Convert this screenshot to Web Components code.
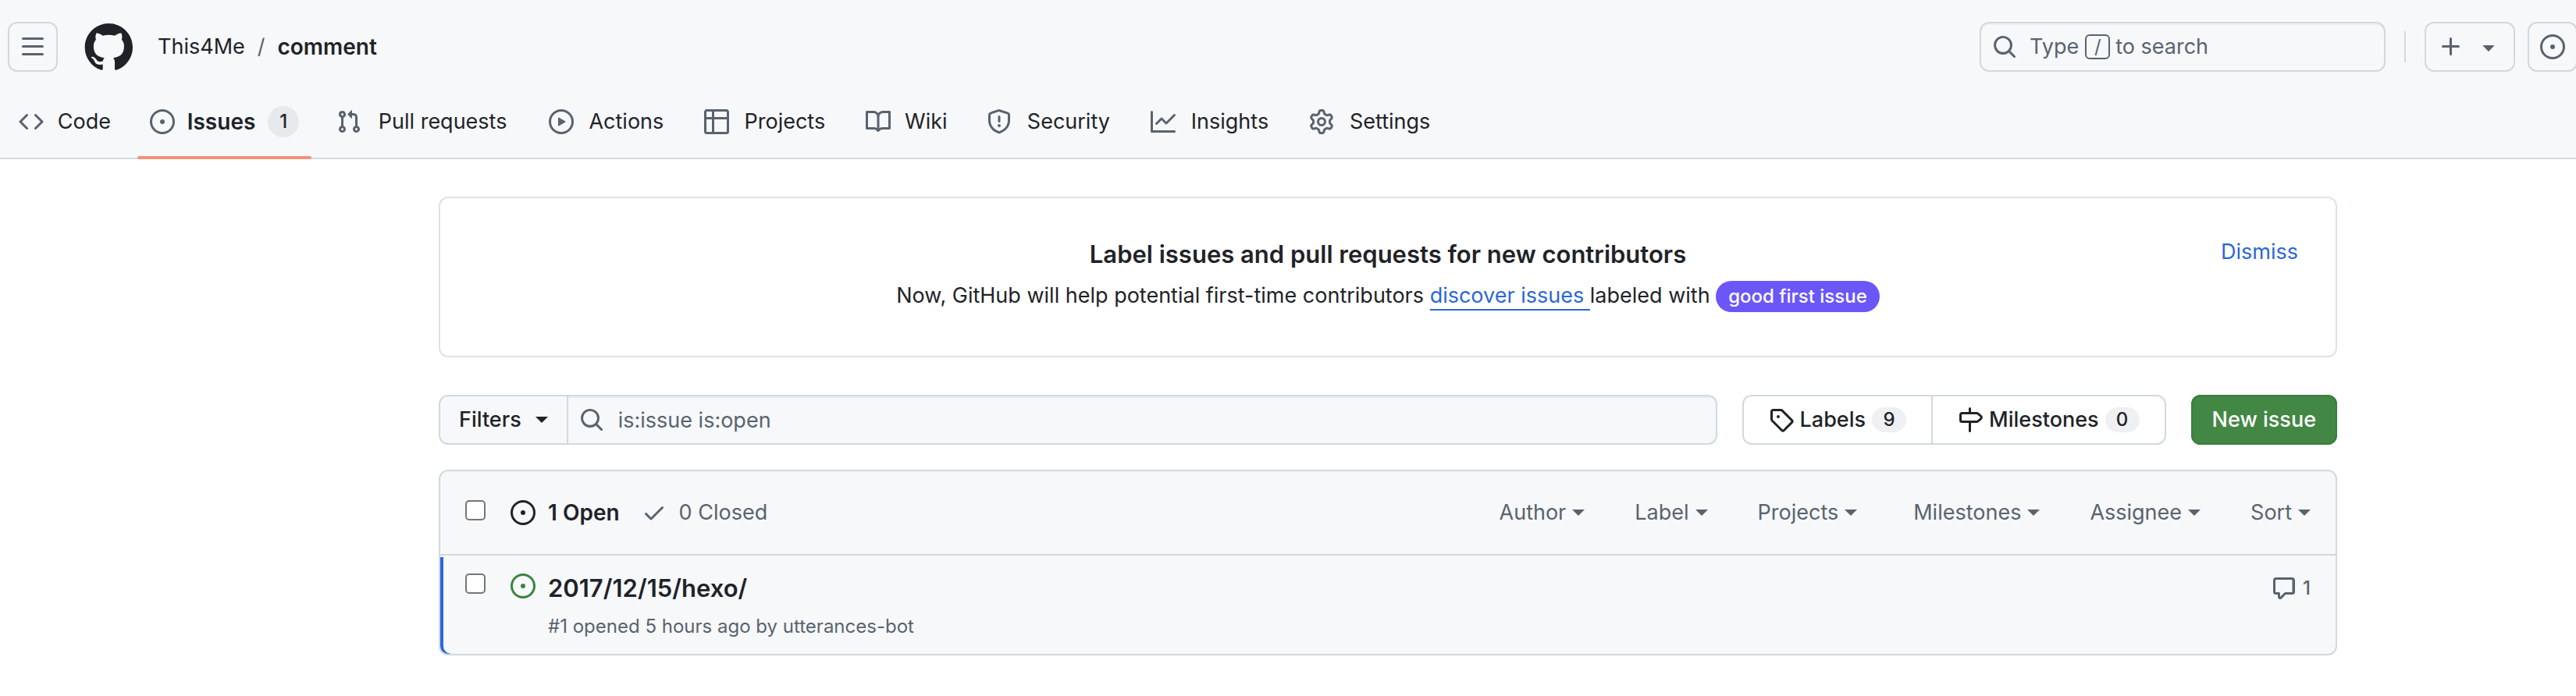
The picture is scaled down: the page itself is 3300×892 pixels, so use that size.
<!DOCTYPE html>
<html lang="en">
<head>
<meta charset="utf-8">
<meta name="viewport" content="width=device-width, initial-scale=1">
<title>Issues · This4Me/comment</title>
<style>
:root {
  --fg: #1f2328;
  --muted: #59636e;
  --border: #d1d9e0;
  --border-soft: #dee3e8;
  --subtle: #f6f8fa;
  --blue: #2c67d8;
  --green: #3b833f;
}
html, body { margin: 0; background: #fff; }
body {
  color: var(--fg);
  font-family: Inter, "Noto Sans", sans-serif;
  font-size: 27px;
  line-height: 42px;
  overflow-x: hidden;
}
main {
  display: flex;
  flex-direction: column;
  padding: 48px 306px 48px 562px;
}
gh-toolbar { margin: 48px 0 32px; }
</style>
</head>
<body>
<gh-header owner="This4Me" repo="comment"></gh-header>
<gh-nav>
  <gh-nav-item icon="code" label="Code"></gh-nav-item>
  <gh-nav-item icon="issue" label="Issues" count="1" current></gh-nav-item>
  <gh-nav-item icon="pull" label="Pull requests"></gh-nav-item>
  <gh-nav-item icon="play" label="Actions"></gh-nav-item>
  <gh-nav-item icon="table" label="Projects"></gh-nav-item>
  <gh-nav-item icon="book" label="Wiki"></gh-nav-item>
  <gh-nav-item icon="shield" label="Security"></gh-nav-item>
  <gh-nav-item icon="graph" label="Insights"></gh-nav-item>
  <gh-nav-item icon="gear" label="Settings"></gh-nav-item>
</gh-nav>
<main>
  <gh-banner>
    <span slot="title">Label issues and pull requests for new contributors</span>
  </gh-banner>
  <gh-toolbar></gh-toolbar>
  <gh-issue-list>
    <gh-menu slot="menus" label="Author"></gh-menu>
    <gh-menu slot="menus" label="Label"></gh-menu>
    <gh-menu slot="menus" label="Projects" wide></gh-menu>
    <gh-menu slot="menus" label="Milestones"></gh-menu>
    <gh-menu slot="menus" label="Assignee"></gh-menu>
    <gh-menu slot="menus" label="Sort"></gh-menu>
    <gh-issue-row comments="1">
      <span slot="title">2017/12/15/hexo/</span>
      <span slot="meta">#1 opened 5 hours ago by utterances-bot</span>
    </gh-issue-row>
  </gh-issue-list>
</main>

<script>
const ICONS = {
  bars: 'M1 2.75A.75.75 0 0 1 1.75 2h12.5a.75.75 0 0 1 0 1.5H1.75A.75.75 0 0 1 1 2.75Zm0 5A.75.75 0 0 1 1.75 7h12.5a.75.75 0 0 1 0 1.5H1.75A.75.75 0 0 1 1 7.75ZM1.75 12h12.5a.75.75 0 0 1 0 1.5H1.75a.75.75 0 0 1 0-1.5Z',
  mark: 'M12.5.75C6.146.75 1 5.896 1 12.25c0 5.089 3.292 9.387 7.863 10.91.575.101.79-.244.79-.546 0-.273-.014-1.178-.014-2.142-2.889.532-3.636-.704-3.866-1.35-.13-.331-.69-1.352-1.18-1.625-.402-.216-.977-.748-.014-.762.906-.014 1.553.834 1.769 1.179 1.035 1.74 2.688 1.25 3.349.948.1-.747.402-1.25.733-1.538-2.559-.287-5.232-1.279-5.232-5.678 0-1.25.445-2.285 1.178-3.09-.115-.288-.517-1.467.115-3.048 0 0 .963-.302 3.163 1.179.92-.259 1.897-.388 2.875-.388.977 0 1.955.13 2.875.388 2.2-1.495 3.162-1.179 3.162-1.179.633 1.581.23 2.76.115 3.048.733.805 1.179 1.825 1.179 3.09 0 4.413-2.688 5.39-5.247 5.678.417.36.776 1.05.776 2.128 0 1.538-.014 2.774-.014 3.162 0 .302.216.662.79.547C20.709 21.637 24 17.324 24 12.25 24 5.896 18.854.75 12.5.75Z',
  code: 'm11.28 3.22 4.25 4.25a.75.75 0 0 1 0 1.06l-4.25 4.25a.749.749 0 0 1-1.275-.326.749.749 0 0 1 .215-.734L13.94 8l-3.72-3.72a.749.749 0 0 1 .326-1.275.749.749 0 0 1 .734.215Zm-6.56 0a.751.751 0 0 1 1.042.018.751.751 0 0 1 .018 1.042L2.06 8l3.72 3.72a.749.749 0 0 1-.326 1.275.749.749 0 0 1-.734-.215L.47 8.53a.75.75 0 0 1 0-1.06Z',
  issue: 'M8 9.5a1.5 1.5 0 1 0 0-3 1.5 1.5 0 0 0 0 3ZM8 0a8 8 0 1 1 0 16A8 8 0 0 1 8 0ZM1.5 8a6.5 6.5 0 1 0 13 0 6.5 6.5 0 0 0-13 0Z',
  pull: 'M1.5 3.25a2.25 2.25 0 1 1 3 2.122v5.256a2.251 2.251 0 1 1-1.5 0V5.372A2.25 2.25 0 0 1 1.5 3.25Zm5.677-.177L9.573.677A.25.25 0 0 1 10 .854V2.5h1A2.5 2.5 0 0 1 13.5 5v5.628a2.251 2.251 0 1 1-1.5 0V5a1 1 0 0 0-1-1h-1v1.646a.25.25 0 0 1-.427.177L7.177 3.427a.25.25 0 0 1 0-.354ZM3.75 2.5a.75.75 0 1 0 0 1.5.75.75 0 0 0 0-1.5Zm0 9.5a.75.75 0 1 0 0 1.5.75.75 0 0 0 0-1.5Zm8.25.75a.75.75 0 1 0 1.5 0 .75.75 0 0 0-1.5 0Z',
  play: 'M8 0a8 8 0 1 1 0 16A8 8 0 0 1 8 0ZM1.5 8a6.5 6.5 0 1 0 13 0 6.5 6.5 0 0 0-13 0Zm4.879-2.773 4.264 2.559a.25.25 0 0 1 0 .428l-4.264 2.559A.25.25 0 0 1 6 10.559V5.442a.25.25 0 0 1 .379-.215Z',
  table: 'M0 1.75C0 .784.784 0 1.75 0h12.5C15.216 0 16 .784 16 1.75v12.5A1.75 1.75 0 0 1 14.25 16H1.75A1.75 1.75 0 0 1 0 14.25ZM6.5 6.5v8h7.75a.25.25 0 0 0 .25-.25V6.5Zm8-1.5V1.75a.25.25 0 0 0-.25-.25H6.5V5Zm-13 1.5v7.75c0 .138.112.25.25.25H5v-8ZM5 5V1.5H1.75a.25.25 0 0 0-.25.25V5Z',
  book: 'M0 1.75A.75.75 0 0 1 .75 1h4.253c1.227 0 2.317.59 3 1.501A3.743 3.743 0 0 1 11.006 1h4.245a.75.75 0 0 1 .75.75v10.5a.75.75 0 0 1-.75.75h-4.507a2.25 2.25 0 0 0-1.591.659l-.622.621a.75.75 0 0 1-1.06 0l-.622-.621A2.25 2.25 0 0 0 5.258 13H.75a.75.75 0 0 1-.75-.75Zm7.251 10.324.004-5.073-.002-2.253A2.25 2.25 0 0 0 5.003 2.5H1.5v9h3.757a3.75 3.75 0 0 1 1.994.574ZM8.755 4.75l-.004 7.322a3.752 3.752 0 0 1 1.992-.572H14.5v-9h-3.495a2.25 2.25 0 0 0-2.25 2.25Z',
  shield: 'M7.467.133a1.748 1.748 0 0 1 1.066 0l5.25 1.68A1.75 1.75 0 0 1 15 3.48V7c0 1.566-.32 3.182-1.303 4.682-.983 1.498-2.585 2.813-5.032 3.855a1.697 1.697 0 0 1-1.33 0c-2.447-1.042-4.049-2.357-5.032-3.855C1.32 10.182 1 8.566 1 7V3.48a1.75 1.75 0 0 1 1.217-1.667Zm.61 1.429a.25.25 0 0 0-.153 0l-5.25 1.68a.25.25 0 0 0-.174.238V7c0 1.358.275 2.666 1.057 3.86.784 1.194 2.121 2.34 4.366 3.297a.196.196 0 0 0 .154 0c2.245-.956 3.582-2.104 4.366-3.298C13.225 9.666 13.5 8.36 13.5 7V3.48a.251.251 0 0 0-.174-.237l-5.25-1.68ZM8.75 4.75v3a.75.75 0 0 1-1.5 0v-3a.75.75 0 0 1 1.5 0ZM9 10.5a1 1 0 1 1-2 0 1 1 0 0 1 2 0Z',
  graph: 'M1.5 1.75V13.5h13.75a.75.75 0 0 1 0 1.5H.75a.75.75 0 0 1-.75-.75V1.75a.75.75 0 0 1 1.5 0Zm14.28 2.53-5.25 5.25a.75.75 0 0 1-1.06 0L7 7.06 4.28 9.78a.751.751 0 0 1-1.042-.018.751.751 0 0 1-.018-1.042l3.25-3.25a.75.75 0 0 1 1.06 0L10 7.94l4.72-4.72a.751.751 0 0 1 1.042.018.751.751 0 0 1 .018 1.042Z',
  gear: 'M8 0a8.2 8.2 0 0 1 .701.031C9.444.095 9.99.645 10.16 1.29l.288 1.107c.018.066.079.158.212.224.231.114.454.243.668.386.123.082.233.09.299.071l1.103-.303c.644-.176 1.392.021 1.82.63.27.385.506.792.704 1.218.315.675.111 1.422-.364 1.891l-.814.806c-.049.048-.098.147-.088.294.016.257.016.515 0 .772-.01.147.038.246.088.294l.814.806c.475.469.679 1.216.364 1.891a7.977 7.977 0 0 1-.704 1.217c-.428.61-1.176.807-1.82.63l-1.102-.302c-.067-.019-.177-.011-.3.071a5.909 5.909 0 0 1-.668.386c-.133.066-.194.158-.211.224l-.29 1.106c-.168.646-.715 1.196-1.458 1.26a8.006 8.006 0 0 1-1.402 0c-.743-.064-1.289-.614-1.458-1.26l-.289-1.106c-.018-.066-.079-.158-.212-.224a5.738 5.738 0 0 1-.668-.386c-.123-.082-.233-.09-.299-.071l-1.103.303c-.644.176-1.392-.021-1.82-.63a8.12 8.12 0 0 1-.704-1.218c-.315-.675-.111-1.422.363-1.891l.815-.806c.05-.048.098-.147.088-.294a6.214 6.214 0 0 1 0-.772c.01-.147-.038-.246-.088-.294l-.815-.806C.635 6.045.431 5.298.746 4.623a7.92 7.92 0 0 1 .704-1.217c.428-.61 1.176-.807 1.82-.63l1.102.302c.067.019.177.011.3-.071.214-.143.437-.272.668-.386.133-.066.194-.158.211-.224l.29-1.106C6.009.645 6.556.095 7.299.03 7.53.01 7.764 0 8 0Zm-.571 1.525c-.036.003-.108.036-.137.146l-.289 1.105c-.147.561-.549.967-.998 1.189-.173.086-.34.183-.5.29-.417.278-.97.423-1.529.27l-1.103-.303c-.109-.03-.175.016-.195.045-.22.312-.412.644-.573.99-.014.031-.021.11.059.19l.815.806c.411.406.562.957.53 1.456a4.709 4.709 0 0 0 0 .582c.032.499-.119 1.05-.53 1.456l-.815.806c-.081.08-.073.159-.059.19.162.346.353.677.573.989.02.03.085.076.195.046l1.102-.303c.56-.153 1.113-.008 1.53.27.161.107.328.204.501.29.447.222.85.629.997 1.189l.289 1.105c.029.109.101.143.137.146a6.6 6.6 0 0 0 1.142 0c.036-.003.108-.036.137-.146l.289-1.105c.147-.561.549-.967.998-1.189.173-.086.34-.183.5-.29.417-.278.97-.423 1.529-.27l1.103.303c.109.029.175-.016.195-.045.22-.313.411-.644.573-.99.014-.031.021-.11-.059-.19l-.815-.806c-.411-.406-.562-.957-.53-1.456a4.709 4.709 0 0 0 0-.582c-.032-.499.119-1.05.53-1.456l.815-.806c.081-.08.073-.159.059-.19a6.464 6.464 0 0 0-.573-.989c-.02-.03-.085-.076-.195-.046l-1.102.303c-.56.153-1.113.008-1.53-.27a4.44 4.44 0 0 0-.501-.29c-.447-.222-.85-.629-.997-1.189l-.289-1.105c-.029-.11-.101-.143-.137-.146a6.6 6.6 0 0 0-1.142 0ZM11 8a3 3 0 1 1-6 0 3 3 0 0 1 6 0ZM9.5 8a1.5 1.5 0 1 0-3.001.001A1.5 1.5 0 0 0 9.5 8Z',
  search: 'M10.68 11.74a6 6 0 0 1-7.922-8.982 6 6 0 0 1 8.982 7.922l3.04 3.04a.749.749 0 0 1-.326 1.275.749.749 0 0 1-.734-.215ZM11.5 7a4.499 4.499 0 1 0-8.997 0A4.499 4.499 0 0 0 11.5 7Z',
  plus: 'M7.75 2a.75.75 0 0 1 .75.75V7h4.25a.75.75 0 0 1 0 1.5H8.5v4.25a.75.75 0 0 1-1.5 0V8.5H2.75a.75.75 0 0 1 0-1.5H7V2.75A.75.75 0 0 1 7.75 2Z',
  down: 'm4.427 7.427 3.396 3.396a.25.25 0 0 0 .354 0l3.396-3.396A.25.25 0 0 0 11.396 7H4.604a.25.25 0 0 0-.177.427Z',
  tag: 'M1 7.775V2.75C1 1.784 1.784 1 2.75 1h5.025c.464 0 .91.184 1.238.513l6.25 6.25a1.75 1.75 0 0 1 0 2.474l-5.026 5.026a1.75 1.75 0 0 1-2.474 0l-6.25-6.25A1.752 1.752 0 0 1 1 7.775Zm1.5 0c0 .066.026.13.073.177l6.25 6.25a.25.25 0 0 0 .354 0l5.025-5.025a.25.25 0 0 0 0-.354l-6.25-6.25a.25.25 0 0 0-.177-.073H2.75a.25.25 0 0 0-.25.25ZM6 5a1 1 0 1 1 0 2 1 1 0 0 1 0-2Z',
  milestone: 'M7.75 0a.75.75 0 0 1 .75.75V3h3.634c.414 0 .814.147 1.13.414l2.07 1.75a1.75 1.75 0 0 1 0 2.672l-2.07 1.75a1.75 1.75 0 0 1-1.13.414H8.5v5.25a.75.75 0 0 1-1.5 0V10H2.75A1.75 1.75 0 0 1 1 8.25v-3.5C1 3.784 1.784 3 2.75 3H7V.75A.75.75 0 0 1 7.75 0Zm4.384 8.5a.25.25 0 0 0 .161-.06l2.07-1.75a.248.248 0 0 0 0-.38l-2.07-1.75a.25.25 0 0 0-.161-.06H2.75a.25.25 0 0 0-.25.25v3.5c0 .138.112.25.25.25h9.384Z',
  check: 'M13.78 4.22a.75.75 0 0 1 0 1.06l-7.25 7.25a.75.75 0 0 1-1.06 0L2.22 9.28a.751.751 0 0 1 .018-1.042.751.751 0 0 1 1.042-.018L6 10.94l6.72-6.72a.75.75 0 0 1 1.06 0Z',
  comment: 'M1 2.75C1 1.784 1.784 1 2.75 1h10.5c.966 0 1.75.784 1.75 1.75v7.5A1.75 1.75 0 0 1 13.25 12H9.06l-2.573 2.573A1.458 1.458 0 0 1 4 13.543V12H2.75A1.75 1.75 0 0 1 1 10.25Zm1.75-.25a.25.25 0 0 0-.25.25v7.5c0 .138.112.25.25.25h2a.75.75 0 0 1 .75.75v2.19l2.72-2.72a.749.749 0 0 1 .53-.22h4.25a.25.25 0 0 0 .25-.25v-7.5a.25.25 0 0 0-.25-.25Z'
};

const BASE = `
  *, *::before, *::after { box-sizing: border-box; }
  a { color: inherit; text-decoration: none; }
  button { margin: 0; font: inherit; color: inherit; background: none; border: 0; padding: 0; cursor: pointer; }
`;

function define(name, render) {
  customElements.define(name, class extends HTMLElement {
    constructor() {
      super();
      this.attachShadow({ mode: 'open' });
    }
    connectedCallback() {
      const t = document.createElement('template');
      t.innerHTML = render(this);
      this.shadowRoot.replaceChildren(t.content.cloneNode(true));
    }
  });
}

define('gh-icon', el => {
  const name = el.getAttribute('name');
  const box = name === 'mark' ? 24 : 16;
  return `<style>
    :host { display: block; flex: none; width: 32px; height: 32px; }
    :host([name="mark"]) { width: 64px; height: 64px; }
    svg { display: block; width: 100%; height: 100%; fill: currentColor; }
  </style>
  <svg viewBox="0 0 ${box} ${box}" aria-hidden="true"><path fill-rule="evenodd" d="${ICONS[name]}"/></svg>`;
});

define('gh-caret', () => `<style>
  :host { display: block; flex: none; width: 0; height: 0; border: 8px solid transparent; border-top-color: currentColor; border-bottom-width: 0; }
</style>`);

define('gh-counter', () => `<style>${BASE}
  :host { display: flex; flex: none; align-items: center; justify-content: center; min-width: 44px; height: 32px; border-radius: 16px;
    background: #eff0f2; font-size: 24px; line-height: 32px; font-weight: 500; }
  :host([large]) { min-width: 40px; height: 40px; border-radius: 20px; background: #e7eaed; }
</style><slot></slot>`);

define('gh-header', el => `<style>${BASE}
  :host { display: block; background: var(--subtle); }
  header { display: flex; align-items: center; height: 120px; padding-left: 10px; }
  .box { display: flex; flex: none; align-items: center; justify-content: center; height: 64px; min-width: 64px; border: 2px solid var(--border); border-radius: 12px; color: var(--muted); }
  .logo { margin: 0 32px; }
  .crumbs { display: flex; gap: 16px; }
  .crumbs b { font-size: 28px; font-weight: 600; }
  .crumbs i { font-style: normal; color: var(--muted); }
  .actions { display: flex; flex: none; align-items: center; margin-left: auto; margin-right: -2px; }
  .search { width: 520px; justify-content: flex-start; padding: 0 14px; box-shadow: inset 0 2px 0 #eceff2; }
  .search span { margin-left: 16px; }
  kbd { display: block; width: 32px; height: 32px; margin: 0 7px 0 8px; border: 2px solid var(--muted); border-radius: 6px; font: 24px/28px Inter, sans-serif; text-align: center; }
  .rule { width: 2px; height: 40px; margin: 0 24px; background: var(--border); }
  .new { gap: 16px; width: 116px; margin-right: 16px; }
</style>
<header>
  <button class="box" type="button" aria-label="Open menu"><gh-icon name="bars"></gh-icon></button>
  <a class="logo" href="#" aria-label="Home"><gh-icon name="mark"></gh-icon></a>
  <nav class="crumbs"><a href="#">${el.getAttribute('owner')}</a><i>/</i><a href="#"><b>${el.getAttribute('repo')}</b></a></nav>
  <div class="actions">
    <button class="box search" type="button"><gh-icon name="search"></gh-icon><span>Type</span><kbd>/</kbd>to search</button>
    <div class="rule"></div>
    <button class="box new" type="button" aria-label="Create new"><gh-icon name="plus"></gh-icon><gh-icon name="down"></gh-icon></button>
    <button class="box" type="button" aria-label="Your issues"><gh-icon name="issue"></gh-icon></button>
  </div>
</header>`);

define('gh-nav', () => `<style>${BASE}
  :host { display: block; background: var(--subtle); }
  nav { display: flex; gap: 16px; height: 84px; padding: 0 8px; border-bottom: 2px solid var(--border); }
</style><nav aria-label="Repository"><slot></slot></nav>`);

/* The label reserves the width of its bold form, so tabs keep their place when one becomes current. */
define('gh-nav-item', el => {
  const label = el.getAttribute('label');
  const count = el.getAttribute('count');
  return `<style>${BASE}
    :host { display: block; flex: none; margin-bottom: -2px; }
    a { position: relative; display: flex; align-items: center; gap: 16px; height: 84px; padding: 0 16px 12px; }
    gh-icon { color: var(--muted); }
    .label { display: grid; justify-items: center; }
    .label::after { content: attr(data-text); height: 0; overflow: hidden; visibility: hidden; font-size: 28px; font-weight: 600; }
    :host([current]) .label { font-size: 28px; font-weight: 600; }
    :host([current]) a::after { content: ""; position: absolute; left: 0; right: 0; bottom: 0; height: 4px; border-radius: 2px; background: #f3917a; }
  </style>
  <a href="#"><gh-icon name="${el.getAttribute('icon')}"></gh-icon><span class="label" data-text="${label}">${label}</span>${count ? `<gh-counter large>${count}</gh-counter>` : ''}</a>`;
});

define('gh-banner', () => `<style>${BASE}
  :host { display: grid; grid-template-columns: 1fr auto 1fr; padding: 48px 48px 56px; border: 2px solid var(--border-soft); border-radius: 12px; }
  .text { grid-column: 2; text-align: center; }
  h2 { margin: 0 0 8px; font-size: 31px; line-height: 48px; font-weight: 600; }
  p { display: flex; margin: 0; white-space: pre; }
  p a { height: 40px; color: var(--blue); border-bottom: 2px solid var(--blue); }
  .pill { height: 40px; margin-top: 2px; padding: 0 16px; border-radius: 20px; background: #6b57f8; color: #fff; font-size: 24px; line-height: 40px; font-weight: 500; }
  .dismiss { justify-self: end; align-self: start; color: var(--blue); }
</style>
<div class="text">
  <h2><slot name="title"></slot></h2>
  <p><span>Now, GitHub will help potential first-time contributors </span><a href="#">discover issues </a><span>labeled with </span><span class="pill">good first issue</span></p>
</div>
<button class="dismiss" type="button">Dismiss</button>`);

define('gh-toolbar', () => `<style>${BASE}
  :host { display: flex; gap: 32px; font-weight: 500; }
  .search { display: flex; flex: 1; min-width: 0; height: 64px; border: 2px solid var(--border); border-radius: 12px; background: var(--subtle); overflow: hidden; }
  .filters { display: flex; flex: none; align-items: center; gap: 18px; padding: 0 24px; border-right: 2px solid var(--border); }
  label { display: flex; flex: 1; align-items: center; gap: 18px; padding-left: 14px; color: var(--muted); box-shadow: inset 0 2px 0 #e9ecf0; }
  input { flex: 1; min-width: 0; height: 60px; padding: 0; border: 0; outline: 0; background: transparent; color: var(--muted); font: inherit; font-weight: 400; }
  .group { display: flex; flex: none; height: 64px; border: 2px solid var(--border); border-radius: 12px; }
  .group a { display: flex; align-items: center; gap: 8px; padding: 0 32px; }
  .group a + a { border-left: 2px solid var(--border); }
  .new { flex: none; height: 64px; padding: 0 27px; border-radius: 12px; background: #438744; box-shadow: inset 0 0 0 2px #3c7d41; color: #fff; }
</style>
<div class="search">
  <button class="filters" type="button">Filters<gh-caret></gh-caret></button>
  <label><gh-icon name="search"></gh-icon><input type="text" aria-label="Search all issues" value="is:issue is:open" spellcheck="false"></label>
</div>
<div class="group">
  <a href="#"><gh-icon name="tag"></gh-icon>Labels<gh-counter>9</gh-counter></a>
  <a href="#"><gh-icon name="milestone"></gh-icon>Milestones<gh-counter>0</gh-counter></a>
</div>
<button class="new" type="button">New issue</button>`);

define('gh-check', el => `<style>
  :host { display: block; flex: none; width: 26px; height: 26px; }
  input { display: block; appearance: none; box-sizing: border-box; width: 26px; height: 26px; margin: 0; border: 2px solid #767676; border-radius: 5px; background: #fff; }
</style><input type="checkbox" aria-label="${el.getAttribute('label')}">`);

define('gh-menu', el => `<style>${BASE}
  :host { display: block; }
  :host([wide]) { margin-right: 8px; }
  button { display: flex; align-items: center; gap: 8px; }
</style><button type="button">${el.getAttribute('label')}<gh-caret></gh-caret></button>`);

define('gh-issue-list', () => `<style>${BASE}
  :host { display: block; border: 2px solid var(--border); border-radius: 12px; background: var(--subtle); }
  .head { display: flex; align-items: center; height: 108px; padding: 0 32px; border-bottom: 2px solid var(--border); color: var(--muted); }
  gh-check { margin: 0 32px 6px 0; }
  a { display: flex; align-items: center; gap: 16px; }
  .open { margin-right: 28px; color: var(--fg); font-size: 28px; font-weight: 600; }
  .menus { display: flex; gap: 64px; margin-left: auto; }
</style>
<div class="head">
  <gh-check label="Select all issues"></gh-check>
  <a class="open" href="#"><gh-icon name="issue"></gh-icon>1 Open</a>
  <a href="#"><gh-icon name="check"></gh-icon>0 Closed</a>
  <div class="menus"><slot name="menus"></slot></div>
</div>
<slot></slot>`);

define('gh-issue-row', el => `<style>${BASE}
  :host { display: flex; align-items: flex-start; padding: 16px 32px 18px; border-top: 2px solid transparent; border-radius: 0 0 10px 10px; box-shadow: inset 4px 0 0 var(--blue); background-clip: padding-box; }
  gh-check { margin: 5px 32px 0 0; }
  gh-icon { margin: 5px 16px 0 0; color: var(--green); }
  .body { flex: 1; min-width: 0; }
  .title { display: block; font-size: 31px; line-height: 48px; font-weight: 600; }
  .meta { margin-top: 8px; color: var(--muted); font-size: 24px; line-height: 34px; }
  .comments { display: flex; align-items: center; gap: 8px; margin-top: 8px; color: var(--muted); font-size: 24px; line-height: 32px; font-weight: 500; }
  .comments gh-icon { margin: 0; color: inherit; }
</style>
<gh-check label="Select issue"></gh-check>
<gh-icon name="issue"></gh-icon>
<div class="body">
  <a class="title" href="#"><slot name="title"></slot></a>
  <div class="meta"><slot name="meta"></slot></div>
</div>
<a class="comments" href="#"><gh-icon name="comment"></gh-icon>${el.getAttribute('comments')}</a>`);
</script>
</body>
</html>
